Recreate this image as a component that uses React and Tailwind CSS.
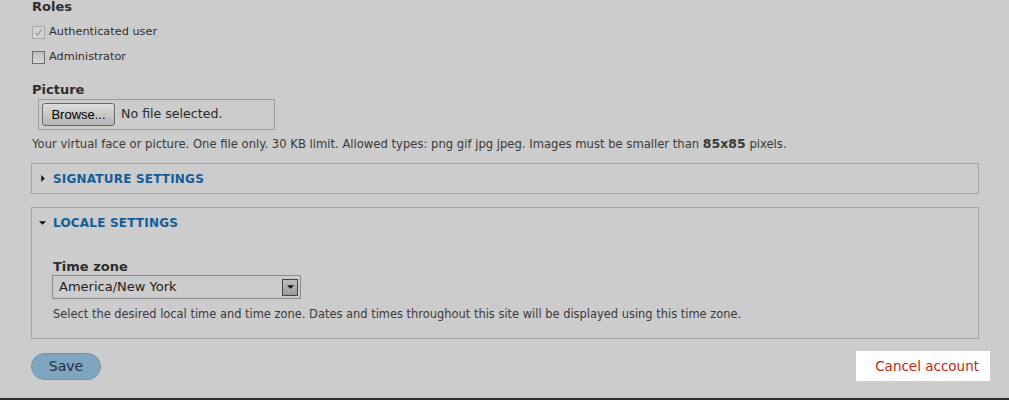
export default function App() {
  return (
    <div className="h-[400px] w-[1009px] overflow-hidden bg-[#cccccc] flex flex-col font-['DejaVu_Sans',Verdana,sans-serif] text-[#2e2e2e]">
      <div className="flex-1 px-[31px] flex flex-col">
        {/* Roles */}
        <div className="text-[13px] font-bold leading-[14px] pl-px">Roles</div>
        <div className="mt-[11px] flex items-center gap-[4px] text-[11.3px] leading-[14px]">
          <span className="w-[13px] h-[13px] ml-px border border-[#a8a8a8] bg-[#d4d4d4] flex items-center justify-center">
            <svg viewBox="0 0 10 10" className="w-[9px] h-[9px]">
              <path d="M1.5 5.5 L4 8 L8.5 1.5" fill="none" stroke="#9a9a9a" strokeWidth="1.4" />
            </svg>
          </span>
          <span>Authenticated user</span>
        </div>
        <div className="mt-[11px] flex items-center gap-[4px] text-[11.3px] leading-[14px]">
          <span className="w-[13px] h-[13px] ml-px border border-[#6e6e6e] bg-gradient-to-b from-[#bdbdbd] to-[#d8d8d8]" />
          <span>Administrator</span>
        </div>

        {/* Picture */}
        <div className="mt-[19px] text-[13px] font-bold leading-[14px] pl-px">Picture</div>
        <div className="mt-[2px] ml-[7px] w-[237px] h-[31px] border border-[#9c9c9c] flex items-center pl-[3px] gap-[6px]">
          <span className="h-[23px] w-[73px] rounded-[3px] border border-[#6a6a6a] bg-gradient-to-b from-[#dcdcdc] to-[#b4b4b4] text-black flex items-center justify-center font-['Liberation_Sans',Arial,sans-serif] text-[13px]">
            Browse...
          </span>
          <span className="text-[12.6px] text-[#2a2a2a]">No file selected.</span>
        </div>
        <div className="mt-[7px] pl-px text-[11.6px] leading-[14px] text-[#3a3a3a]">
          Your virtual face or picture. One file only. 30 KB limit. Allowed types: png gif jpg jpeg. Images must be smaller than <strong className="font-bold text-[12.5px]">85x85</strong> pixels.
        </div>

        {/* Signature */}
        <div className="mt-[12px] w-[948px] h-[31px] border border-[#a3a3a3] flex items-center pl-[9px]">
          <svg viewBox="0 0 4 8" className="w-[4px] h-[7px] mr-[8px]">
            <path d="M0 0 L4 4 L0 8 Z" fill="#111" />
          </svg>
          <span className="text-[12px] font-bold text-[#155d98] tracking-[0.2px]">SIGNATURE SETTINGS</span>
        </div>

        {/* Locale */}
        <div className="mt-[13px] w-[948px] h-[132px] border border-[#a3a3a3] flex flex-col">
          <div className="h-[30px] flex items-center pl-[7px]">
            <svg viewBox="0 0 8 4" className="w-[7px] h-[4px] mr-[7px]">
              <path d="M0 0 L8 0 L4 4 Z" fill="#111" />
            </svg>
            <span className="text-[12px] font-bold text-[#155d98] tracking-[0.2px]">LOCALE SETTINGS</span>
          </div>
          <div className="mt-[22px] pl-[21px] text-[13px] font-bold leading-[14px]">Time zone</div>
          <div className="mt-px ml-[20px] w-[249px] h-[24px] border border-[#8c8c8c] flex items-center justify-between pl-[6px] pr-[2px]">
            <span className="text-[13px] text-[#222]">America/New York</span>
            <span className="w-[16px] h-[17px] border border-[#444] bg-gradient-to-b from-[#bdbdbd] to-[#9a9a9a] flex items-center justify-center">
              <svg viewBox="0 0 8 4" className="w-[7px] h-[4px]">
                <path d="M0 0 L8 0 L4 4 Z" fill="#111" />
              </svg>
            </span>
          </div>
          <div className="mt-[8px] pl-[21px] text-[11.45px] leading-[14px] text-[#3a3a3a]">
            Select the desired local time and time zone. Dates and times throughout this site will be displayed using this time zone.
          </div>
        </div>

        {/* Actions */}
        <div className="mt-[12px] flex items-center justify-between -mr-[12px]">
          <span className="w-[70px] h-[27px] rounded-full border border-[#6f94ad] bg-[#7fa6c1] text-[14px] text-[#1f2f40] flex items-center justify-center">
            Save
          </span>
          <span className="w-[134px] h-[30px] bg-white text-[13.5px] text-[#c4270e] flex items-center justify-end pr-[11px]">
            Cancel account
          </span>
        </div>
      </div>
      <div className="h-[2px] bg-[#2a2a2a]" />
    </div>
  );
}
